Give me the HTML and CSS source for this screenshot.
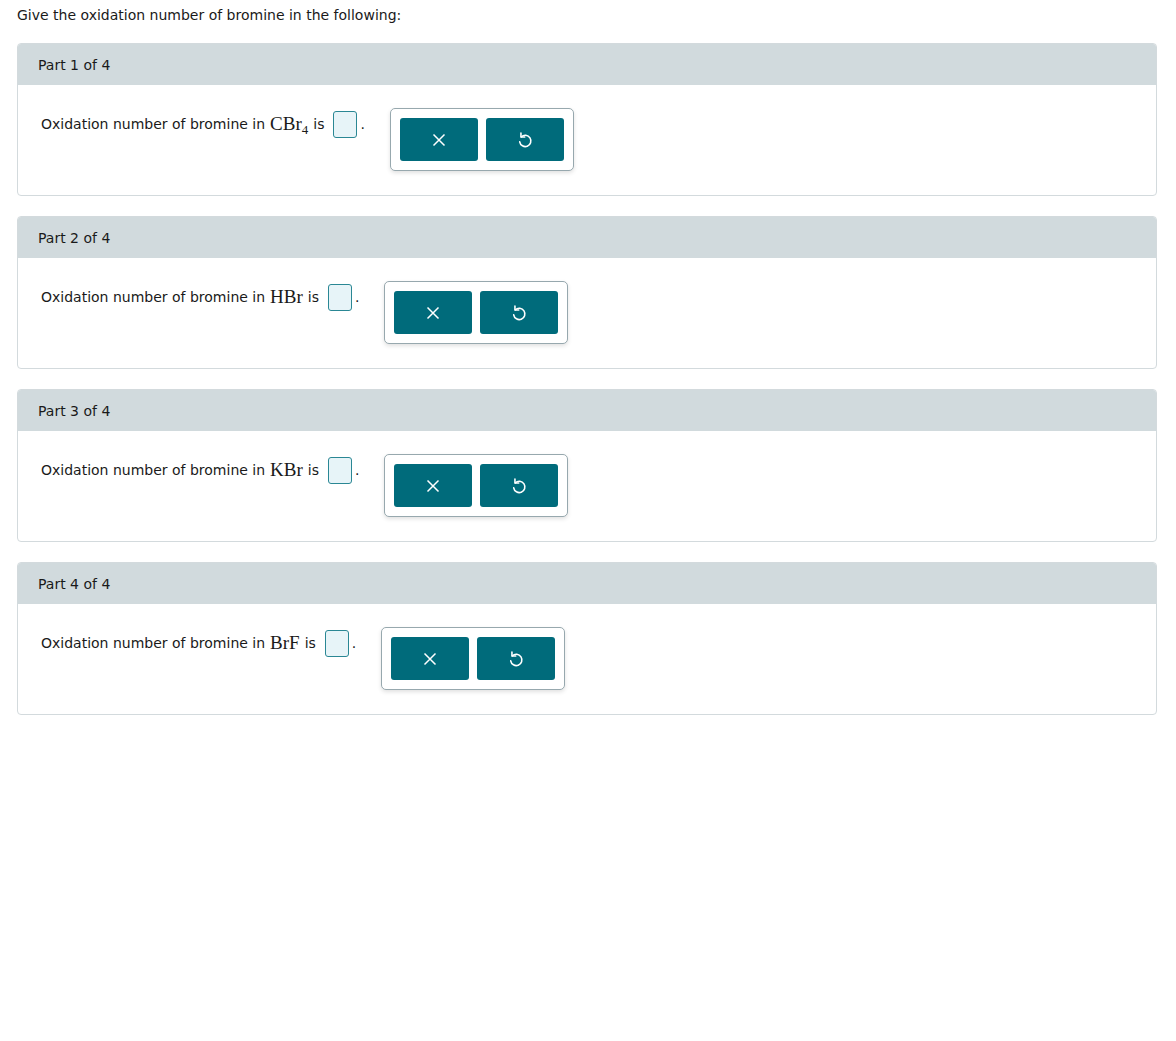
FILE: index.html
```html
<!DOCTYPE html>
<html>
<head>
<meta charset="utf-8">
<link rel="stylesheet" href="styles.css">
</head>
<body>
<p class="intro">Give the oxidation number of bromine in the following:</p>

<section class="part">
  <div class="part-head">Part 1 of 4</div>
  <div class="part-body">
    <div class="question"><span>Oxidation number of bromine in</span><span class="math">CBr<sub>4</sub></span><span>is</span><span class="answer"></span><span class="dot">.</span></div>
    <div class="tools">
      <button class="tool"><svg width="16" height="16" viewBox="0 0 16 16"><path d="M2.5 2.5L13.5 13.5M13.5 2.5L2.5 13.5" stroke="#fff" stroke-width="1.5" fill="none"/></svg></button>
      <button class="tool"><svg width="18" height="18" viewBox="0 0 16 16"><path d="M4.7 5.3A5 5 0 1 1 3.3 9.6" stroke="#fff" stroke-width="1.4" fill="none" stroke-linecap="round"/><path d="M4.4 1.8L4.4 5.3L7.8 5.3" stroke="#fff" stroke-width="1.4" fill="none" stroke-linecap="round" stroke-linejoin="round"/></svg></button>
    </div>
  </div>
</section>

<section class="part">
  <div class="part-head">Part 2 of 4</div>
  <div class="part-body">
    <div class="question"><span>Oxidation number of bromine in</span><span class="math">HBr</span><span>is</span><span class="answer"></span><span class="dot">.</span></div>
    <div class="tools">
      <button class="tool"><svg width="16" height="16" viewBox="0 0 16 16"><path d="M2.5 2.5L13.5 13.5M13.5 2.5L2.5 13.5" stroke="#fff" stroke-width="1.5" fill="none"/></svg></button>
      <button class="tool"><svg width="18" height="18" viewBox="0 0 16 16"><path d="M4.7 5.3A5 5 0 1 1 3.3 9.6" stroke="#fff" stroke-width="1.4" fill="none" stroke-linecap="round"/><path d="M4.4 1.8L4.4 5.3L7.8 5.3" stroke="#fff" stroke-width="1.4" fill="none" stroke-linecap="round" stroke-linejoin="round"/></svg></button>
    </div>
  </div>
</section>

<section class="part">
  <div class="part-head">Part 3 of 4</div>
  <div class="part-body">
    <div class="question"><span>Oxidation number of bromine in</span><span class="math">KBr</span><span>is</span><span class="answer"></span><span class="dot">.</span></div>
    <div class="tools">
      <button class="tool"><svg width="16" height="16" viewBox="0 0 16 16"><path d="M2.5 2.5L13.5 13.5M13.5 2.5L2.5 13.5" stroke="#fff" stroke-width="1.5" fill="none"/></svg></button>
      <button class="tool"><svg width="18" height="18" viewBox="0 0 16 16"><path d="M4.7 5.3A5 5 0 1 1 3.3 9.6" stroke="#fff" stroke-width="1.4" fill="none" stroke-linecap="round"/><path d="M4.4 1.8L4.4 5.3L7.8 5.3" stroke="#fff" stroke-width="1.4" fill="none" stroke-linecap="round" stroke-linejoin="round"/></svg></button>
    </div>
  </div>
</section>

<section class="part">
  <div class="part-head">Part 4 of 4</div>
  <div class="part-body">
    <div class="question"><span>Oxidation number of bromine in</span><span class="math">BrF</span><span>is</span><span class="answer"></span><span class="dot">.</span></div>
    <div class="tools">
      <button class="tool"><svg width="16" height="16" viewBox="0 0 16 16"><path d="M2.5 2.5L13.5 13.5M13.5 2.5L2.5 13.5" stroke="#fff" stroke-width="1.5" fill="none"/></svg></button>
      <button class="tool"><svg width="18" height="18" viewBox="0 0 16 16"><path d="M4.7 5.3A5 5 0 1 1 3.3 9.6" stroke="#fff" stroke-width="1.4" fill="none" stroke-linecap="round"/><path d="M4.4 1.8L4.4 5.3L7.8 5.3" stroke="#fff" stroke-width="1.4" fill="none" stroke-linecap="round" stroke-linejoin="round"/></svg></button>
    </div>
  </div>
</section>
</body>
</html>
```

FILE: styles.css
```css
html, body {
  margin: 0;
  padding: 0;
  background: #fff;
}
body {
  padding: 0 19px 0 17px;
  font-family: "DejaVu Sans", Verdana, sans-serif;
  font-size: 14px;
  color: #1a1a1a;
}
.intro {
  margin: 0;
  padding-top: 6px;
  height: 37px;
  line-height: 18px;
}
.part {
  border: 1px solid #d3dadd;
  border-radius: 4px;
  margin-bottom: 20px;
  overflow: hidden;
}
.part-head {
  background: #d1dadd;
  height: 42px;
  line-height: 44px;
  padding-left: 21px;
  margin: -1px -1px 0 -1px;
}
.part-body {
  display: flex;
  align-items: flex-start;
  padding: 23px 23px 24px 23px;
  height: 63px;
}
.question {
  display: flex;
  align-items: center;
  margin-top: 2px;
  line-height: 28px;
}
.math {
  font-family: "Liberation Serif", "DejaVu Serif", serif;
  font-size: 19px;
  margin: 0 5px;
}
.math sub {
  font-size: 13px;
  vertical-align: -4px;
  line-height: 0;
}
.answer {
  display: inline-block;
  width: 22px;
  height: 25px;
  border: 1.5px solid #2a8794;
  border-radius: 3px;
  background: #e7f4f8;
  margin-left: 9px;
}
.dot {
  margin-left: 3px;
}
.tools {
  display: flex;
  gap: 8px;
  padding: 9px;
  margin-left: 25px;
  border: 1px solid #97a8ae;
  border-radius: 5px;
  box-shadow: 0 2px 4px rgba(0,0,0,0.12);
  background: #fff;
}
.tool {
  width: 78px;
  height: 43px;
  border: none;
  border-radius: 3px;
  background: #006b7b;
  display: flex;
  align-items: center;
  justify-content: center;
  padding: 0;
}
```
